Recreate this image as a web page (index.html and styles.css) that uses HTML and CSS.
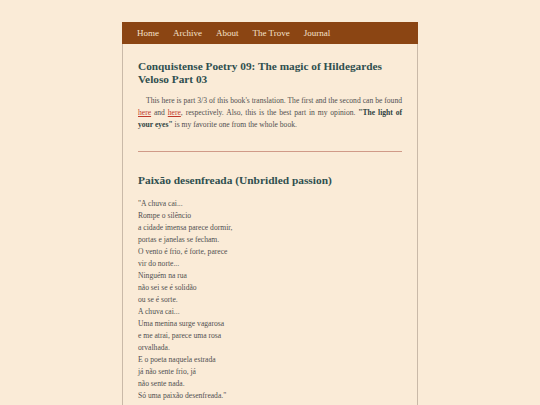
FILE: index.html
```html
<!DOCTYPE html>
<html lang="en">
<head>
<meta charset="utf-8">
<title>Conquistense Poetry 09</title>
<link rel="stylesheet" href="styles.css">
</head>
<body>
<div class="page">
  <nav class="nav">
    <a href="#">Home</a>
    <a href="#">Archive</a>
    <a href="#">About</a>
    <a href="#">The Trove</a>
    <a href="#">Journal</a>
  </nav>
  <main class="content">
    <h1 class="title">Conquistense Poetry 09: The magic of Hildegardes Veloso Part 03</h1>
    <p class="intro">This here is part 3/3 of this book's translation. The first and the second can be found <a href="#">here</a> and <a href="#">here</a>, respectively. Also, this is the best part in my opinion. <strong>"The light of your eyes"</strong> is my favorite one from the whole book.</p>
    <hr class="rule">
    <h2 class="poem-title">Paixão desenfreada (Unbridled passion)</h2>
    <div class="poem">
      <p>"A chuva cai...</p>
      <p>Rompe o silêncio</p>
      <p>a cidade imensa parece dormir,</p>
      <p>portas e janelas se fecham.</p>
      <p>O vento é frio, é forte, parece</p>
      <p>vir do norte...</p>
      <p>Ninguém na rua</p>
      <p>não sei se é solidão</p>
      <p>ou se é sorte.</p>
      <p>A chuva cai...</p>
      <p>Uma menina surge vagarosa</p>
      <p>e me atrai, parece uma rosa</p>
      <p>orvalhada.</p>
      <p>E o poeta naquela estrada</p>
      <p>já não sente frio, já</p>
      <p>não sente nada.</p>
      <p>Só uma paixão desenfreada."</p>
    </div>
  </main>
</div>
</body>
</html>
```

FILE: styles.css
```css
html, body {
  margin: 0;
  padding: 0;
  background: #faebd7;
}
body {
  font-family: "Liberation Serif", "Times New Roman", serif;
  color: #505050;
}
.page {
  width: 294px;
  margin: 22px auto 0;
  border: 1px solid #c9b9a8;
  border-top: none;
  min-height: 400px;
}
.nav {
  display: flex;
  gap: 14px;
  height: 22px;
  align-items: center;
  padding: 0 15px;
  background: #8b4513;
  margin: 0 -1px;
}
.nav a {
  color: #f6e2cb;
  text-decoration: none;
  font-size: 9px;
}
.content {
  padding: 16px 15px 0;
}
.title {
  margin: 0;
  font-size: 11.3px;
  line-height: 13.3px;
  color: #2f4f4f;
  font-weight: bold;
}
.intro {
  margin: 8px 0 0;
  font-size: 7.6px;
  line-height: 12px;
  text-indent: 8px;
  text-align: justify;
}
.intro a {
  color: #c0392b;
  text-decoration: underline;
}
.intro strong {
  color: #2f3f3f;
}
.rule {
  border: none;
  border-top: 1px solid #d09a88;
  margin: 20px 0 0;
  height: 0;
}
.poem-title {
  margin: 21px 0 0;
  font-size: 11.4px;
  line-height: 14px;
  color: #2f4f4f;
  font-weight: bold;
}
.poem {
  margin-top: 11px;
}
.poem p {
  margin: 0;
  font-size: 7.6px;
  line-height: 12px;
}
```
